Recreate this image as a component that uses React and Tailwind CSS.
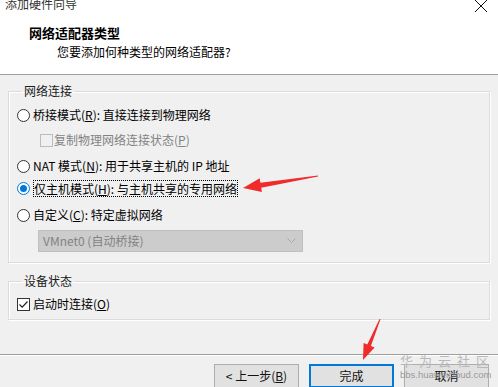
// Add hardware wizard – network adapter type
const font = "font-['Microsoft_YaHei','Noto_Sans_CJK_SC',sans-serif]";

function Radio({ checked }) {
    return (
        <span className={`flex items-center justify-center w-[13px] h-[13px] rounded-full bg-white border ${checked ? "border-[#0078d7]" : "border-[#333]"}`}>
            {checked && <span className="w-[7px] h-[7px] rounded-full bg-[#0078d7]" />}
        </span>
    )
}

function Checkbox({ checked, disabled }) {
    return (
        <span className={`flex items-center justify-center w-[13px] h-[13px] border ${disabled ? "border-[#bcbcbc] bg-[#f0f0f0]" : "border-[#333] bg-white"}`}>
            {checked && (
                <svg width="11" height="11" viewBox="0 0 11 11">
                    <path d="M1.5 5.5 L4.2 8.2 L9.5 2.5" fill="none" stroke="#222" strokeWidth="1.2" />
                </svg>
            )}
        </span>
    )
}

function Group({ title, className, children }) {
    return (
        <fieldset className={`mx-[8px] border border-[#dcdcdc] shadow-[1px_1px_0_#fff,inset_1px_1px_0_#fff] ${className}`}>
            <legend className="ml-[5px] px-[2px] text-[12px] leading-[16px] text-[#1a1a1a]">{title}</legend>
            {children}
        </fieldset>
    )
}

function Button({ primary, children }) {
    return (
        <div className={`flex items-center justify-center w-[85px] h-[24px] bg-[#e1e1e1] text-[12px] text-[#111] ${primary ? "border-2 border-[#0078d7]" : "border border-[#adadad]"}`}>
            {children}
        </div>
    )
}

function App() {
    return (
        <div className={`relative w-[498px] h-[387px] overflow-hidden bg-[#f0f0f0] text-black ${font}`}>
            {/* Header */}
            <div className="h-[75px] bg-white border-b border-[#a0a0a0]">
                <div className="flex justify-between h-[12px] overflow-hidden">
                    <span className="ml-[5px] -mt-[4px] text-[12px] leading-[16px] text-[#333]">添加硬件向导</span>
                    <svg className="mr-[10px]" width="14" height="12" viewBox="0 0 14 12">
                        <path d="M1 0 L13 12 M13 0 L1 12" stroke="#111" strokeWidth="1" />
                    </svg>
                </div>
                <div className="pl-[29px] mt-[13px] text-[13px] font-bold leading-[16px]">网络适配器类型</div>
                <div className="pl-[57px] mt-[3px] text-[12px] leading-[16px]">您要添加何种类型的网络适配器?</div>
            </div>

            {/* Network connection */}
            <Group title="网络连接" className="mt-[8px] pl-[8px] pb-[10px]">
                <div className="flex items-center gap-[3px] h-[16px] mt-[8px] text-[12px]">
                    <Radio />
                    <span>桥接模式(<u>R</u>): 直接连接到物理网络</span>
                </div>
                <div className="flex items-center gap-[1px] h-[16px] mt-[9px] ml-[23px] text-[12px] text-[#838383]">
                    <Checkbox disabled />
                    <span>复制物理网络连接状态(<u>P</u>)</span>
                </div>
                <div className="flex items-center gap-[3px] h-[16px] mt-[10px] text-[12px]">
                    <Radio />
                    <span>NAT 模式(<u>N</u>): 用于共享主机的 IP 地址</span>
                </div>
                <div className="flex items-center gap-[3px] h-[17px] mt-[6px] text-[12px]">
                    <Radio checked />
                    <span className="border border-dotted border-black leading-[15px]">仅主机模式(<u>H</u>): 与主机共享的专用网络</span>
                </div>
                <div className="flex items-center gap-[3px] h-[16px] mt-[10px] text-[12px]">
                    <Radio />
                    <span>自定义(<u>C</u>): 特定虚拟网络</span>
                </div>
                <div className="flex items-center justify-between w-[265px] h-[22px] mt-[7px] ml-[21px] pl-[4px] pr-[6px] bg-[#cccccc] border border-[#bfbfbf] text-[12px] text-[#838383]">
                    <span>VMnet0 (自动桥接)</span>
                    <svg width="9" height="6" viewBox="0 0 9 6">
                        <path d="M0.5 0.5 L4.5 4.5 L8.5 0.5" fill="none" stroke="#a8a8a8" strokeWidth="1" />
                    </svg>
                </div>
            </Group>

            {/* Device status */}
            <Group title="设备状态" className="mt-[10px] pl-[8px] pb-[7px]">
                <div className="flex items-center gap-[3px] h-[16px] mt-[7px] text-[12px]">
                    <Checkbox checked />
                    <span>启动时连接(<u>O</u>)</span>
                </div>
            </Group>

            <div className="mt-[34px] border-t border-[#a0a0a0] shadow-[0_1px_0_#fff]" />

            {/* Buttons */}
            <div className="flex justify-end gap-[10px] mt-[9px] pr-[9px]">
                <Button>&lt; 上一步(<u>B</u>)</Button>
                <Button primary>完成</Button>
                <Button>取消</Button>
            </div>

            {/* Watermark */}
            <div className="absolute left-[400px] top-[353px] flex flex-col items-start pointer-events-none">
                <span className="text-[13px] leading-[16px] tracking-[6px] text-[#b8b8b8]">华为云社区</span>
                <span className="text-[9.5px] leading-[12px] font-['Liberation_Sans',sans-serif] text-[#9a9a9a]">bbs.huaweicloud.com</span>
            </div>

            {/* Annotation arrows */}
            <svg className="absolute left-0 top-0 pointer-events-none" width="498" height="387" viewBox="0 0 498 387">
                <polygon points="243,188 259.7,178.3 260.4,182.7 318,175.5 318,176.5 261.2,187.7 261.9,192.1" fill="#ef2b2b" />
                <polygon points="363,360 363.6,342.9 367.3,344.4 379.5,319 380.5,319.3 370.9,346 374.6,347.5" fill="#ef2b2b" />
            </svg>
        </div>
    )
}

export default App
